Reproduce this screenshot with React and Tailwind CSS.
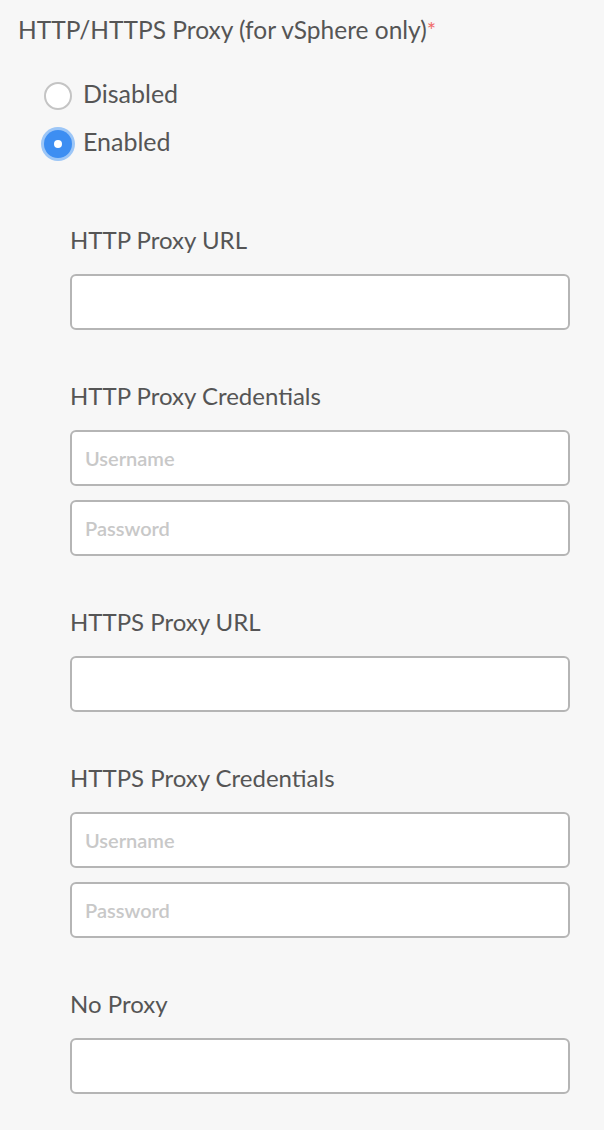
import { useState } from "react";

function Field({ placeholder }) {
  return (
    <input
      type="text"
      placeholder={placeholder}
      className="block w-[500px] h-[56px] rounded-[6px] border-2 border-[#b5b5b5] bg-white px-[13px] text-[20px] font-semibold text-[#555] placeholder:text-[#c8c8c8] outline-none"
    />
  );
}

function Radio({ label, checked, onClick }) {
  return (
    <label onClick={onClick} className="flex items-center gap-[11px] h-[48px] cursor-pointer">
      {checked ? (
        <span className="flex items-center justify-center w-[28px] h-[28px] mt-[2px] rounded-full bg-[#3d8ef2] ring-[3px] ring-[#9cc6f7]">
          <span className="w-[8px] h-[8px] rounded-full bg-white" />
        </span>
      ) : (
        <span className="w-[28px] h-[28px] mt-[2px] rounded-full border-2 border-[#c4c4c4] bg-white" />
      )}
      <span className="text-[25px] leading-[30px] -mt-[4px] text-[#555]">{label}</span>
    </label>
  );
}

export default function App() {
  const [enabled, setEnabled] = useState(true);

  return (
    <div className="min-h-[1130px] bg-[#f7f7f7] text-[#555]" style={{ fontFamily: "Lato, 'Open Sans', sans-serif" }}>
      <div className="pl-[18px] pt-[14px]">
        <h3 className="text-[24.5px] leading-[32px]">
          HTTP/HTTPS Proxy (for vSphere only)<span className="text-[#f06b6b] text-[22px] align-top">*</span>
        </h3>

        {/* proxy toggle */}
        <div className="pl-[26px] pt-[25px] flex flex-col">
          <Radio label="Disabled" checked={!enabled} onClick={() => setEnabled(false)} />
          <Radio label="Enabled" checked={enabled} onClick={() => setEnabled(true)} />
        </div>

        {enabled && (
          <div className="pl-[52px] pt-[56px] flex flex-col">
            <div className="text-[24px] leading-[34px]">HTTP Proxy URL</div>
            <div className="mt-[17px]"><Field /></div>

            <div className="mt-[49px] text-[24px] leading-[34px]">HTTP Proxy Credentials</div>
            <div className="mt-[17px] flex flex-col gap-[14px]">
              <Field placeholder="Username" />
              <Field placeholder="Password" />
            </div>

            <div className="mt-[49px] text-[24px] leading-[34px]">HTTPS Proxy URL</div>
            <div className="mt-[17px]"><Field /></div>

            <div className="mt-[49px] text-[24px] leading-[34px]">HTTPS Proxy Credentials</div>
            <div className="mt-[17px] flex flex-col gap-[14px]">
              <Field placeholder="Username" />
              <Field placeholder="Password" />
            </div>

            <div className="mt-[49px] text-[24px] leading-[34px]">No Proxy</div>
            <div className="mt-[17px]"><Field /></div>
          </div>
        )}
      </div>
    </div>
  );
}
